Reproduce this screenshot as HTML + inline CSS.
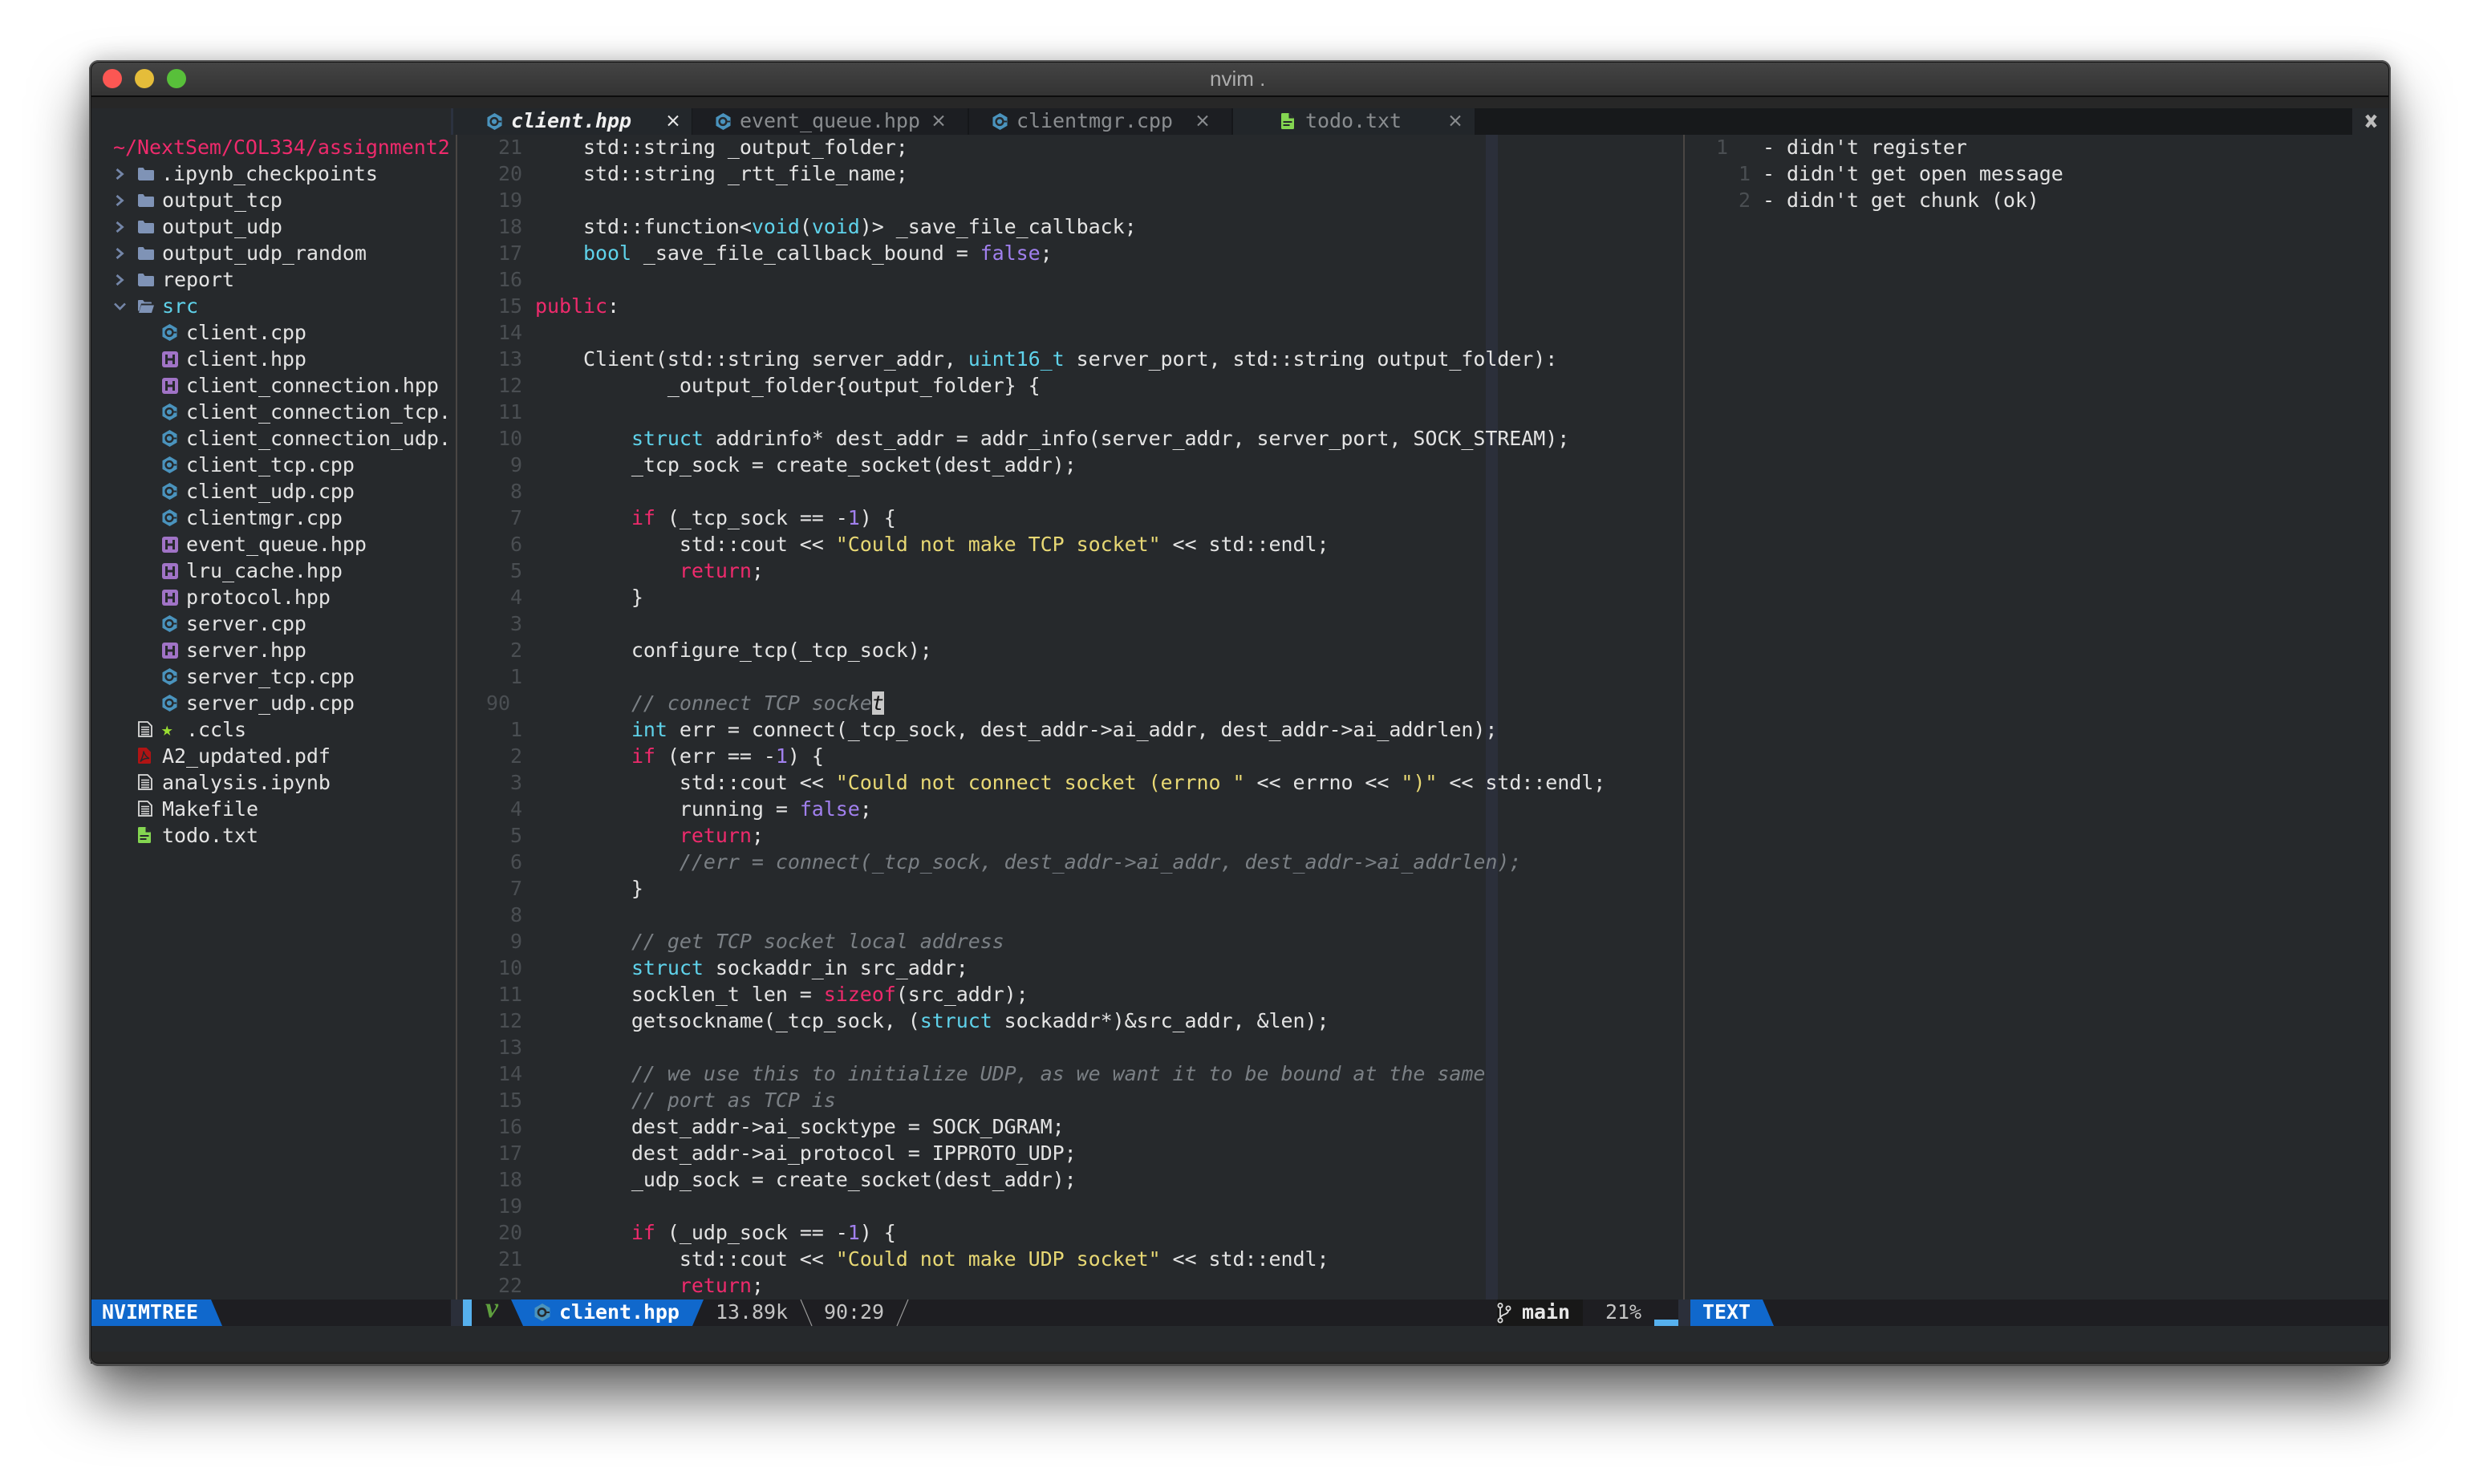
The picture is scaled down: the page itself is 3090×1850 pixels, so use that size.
<!DOCTYPE html>
<html>
<head>
<meta charset="utf-8">
<style>
html,body{margin:0;padding:0;background:#fff;}
body{width:3090px;height:1850px;overflow:hidden;position:relative;font-family:"DejaVu Sans Mono","Liberation Mono",monospace;font-size:25px;letter-spacing:-.06px;color:#e4e4e4;}
.a{position:absolute;}
pre{margin:0;font:inherit;line-height:33px;letter-spacing:inherit;}
.k{color:#ee2a6c}.t{color:#5fd2ea}.n{color:#a180ee}.s{color:#e8d874}.c{color:#7b8085;font-style:italic}
.r{position:absolute;left:0;height:33px;line-height:33px;white-space:pre;margin-top:-1px;}
.tab{position:absolute;height:33px;line-height:33px;top:-1px;white-space:pre;}
svg{position:absolute;display:block;overflow:visible;}
</style>
</head>
<body>
<svg width="0" height="0" style="position:absolute">
<defs>
<symbol id="cpp" viewBox="0 0 20 22"><polygon points="10,0 19.5,5.5 19.5,16.5 10,22 .5,16.5 .5,5.5" fill="#4a93bd"/><circle cx="9.5" cy="11" r="4.6" fill="none" stroke="#26292c" stroke-width="2.6"/><rect x="14" y="10" width="5" height="2" fill="#26292c"/></symbol>
<symbol id="hpp" viewBox="0 0 20 20"><rect x="0" y="0" width="20" height="20" rx="3" fill="#a073c6"/><path d="M5.5 4v12M14.5 4v12M5.5 10h9" stroke="#26292c" stroke-width="3" fill="none"/></symbol>
<symbol id="fold" viewBox="0 0 20 16"><path d="M0 1.5q0-1.5 1.5-1.5h5l2 3h10q1.5 0 1.5 1.5v10q0 1.5-1.5 1.5h-17q-1.500-1.500-1.500-1.500z" fill="#7f93b6"/></symbol>
<symbol id="open" viewBox="0 0 20 16"><path d="M0 1q0-1 1-1h5l2 2.500h8q1 0 1 1v1h-13l-2.500 9h-1.500z" fill="#7f93b6"/><path d="M4 6.500h16l-3 9.500h-16z" fill="#7f93b6"/></symbol>
<symbol id="doc" viewBox="0 0 18 20"><path d="M1 1h11l5 5v13h-16z" fill="none" stroke="#dcdcdc" stroke-width="1.800"/><path d="M4 7.500h10M4 10.500h10M4 13.500h10M4 16.500h10" stroke="#dcdcdc" stroke-width="1.500"/></symbol>
<symbol id="txt" viewBox="0 0 16 20"><path d="M1.500 0h8l6.500 6.500v12q0 1.500-1.500 1.500h-13q-1.500 0-1.500-1.500v-17q0-1.500 1.500-1.500z" fill="#84d651"/><path d="M9.500 0v6.500h6.500z" fill="#26292c"/><path d="M2.500 11h11M2.500 15h8" stroke="#26292c" stroke-width="2"/></symbol>
<symbol id="pdf" viewBox="0 0 16 20"><path d="M1.500 0h9l5.500 5.500v13q0 1.500-1.500 1.500h-13q-1.500 0-1.500-1.500v-17q0-1.500 1.500-1.500z" fill="#b01414"/><path d="M7 4.500c1 4 3 7 7 9-4-.5-8 .5-11 4 2-4 4-9 4-13z" fill="none" stroke="#26292c" stroke-width="1.500"/></symbol>
<symbol id="chev" viewBox="0 0 11 14"><path d="M1.500 1l7 6-7 6" fill="none" stroke="#7486a8" stroke-width="2.800"/></symbol>
<symbol id="chevd" viewBox="0 0 15 10"><path d="M1 1.500l6.500 6.500 6.500-6.500" fill="none" stroke="#7486a8" stroke-width="2.600"/></symbol>
</defs>
</svg>

<!-- window -->
<div class="a" style="left:111px;top:75px;width:2869px;height:1628px;border-radius:12px;background:#26292c;box-shadow:0 42px 70px rgba(0,0,0,.58),0 0 30px rgba(0,0,0,.22);"></div>
<div class="a" style="left:111px;top:75px;width:2869px;height:1628px;box-sizing:border-box;border-radius:12px;border:2px solid #4c4c4c;border-top-color:#555;border-bottom:3px solid #4a4a4a;box-shadow:0 0 0 1px #141414 inset;z-index:5;pointer-events:none"></div>

<!-- title bar -->
<div class="a" style="left:111px;top:75px;width:2869px;height:44px;border-radius:12px 12px 0 0;background:linear-gradient(#454545,#333);border-bottom:2px solid #0c0c0c;box-sizing:content-box;"></div>
<div class="a" style="left:128px;top:86px;width:24px;height:24px;border-radius:50%;background:#fc5753"></div>
<div class="a" style="left:168px;top:86px;width:24px;height:24px;border-radius:50%;background:#e5bd3a"></div>
<div class="a" style="left:208px;top:86px;width:24px;height:24px;border-radius:50%;background:#58c03a"></div>
<div class="a" style="left:1508px;top:82px;line-height:32px;font-family:'Liberation Sans',sans-serif;font-size:26px;letter-spacing:0;color:#aeaeae;white-space:pre">nvim .</div>
<div class="a" style="left:113px;top:121px;width:2864px;height:14px;background:#272727"></div>
<div class="a" style="left:113px;top:1685px;width:2864px;height:15px;background:#272727"></div>

<!-- tabs -->
<div class="a" style="left:0;top:135px;width:3090px;height:33px;">
  <div class="a" style="left:562px;top:0;width:3px;height:33px;background:#2c3240"></div>
  <div class="a" style="left:565px;top:0;width:297px;height:33px;background:#23272b"></div>
  <div class="a" style="left:862px;top:0;width:344px;height:33px;background:#1c1e22;border-left:1px solid #15171a;box-sizing:border-box"></div>
  <div class="a" style="left:1206px;top:0;width:331px;height:33px;background:#1c1e22;border-left:2px solid #15171a;border-right:2px solid #15171a;box-sizing:border-box"></div>
  <div class="a" style="left:1537px;top:0;width:301px;height:33px;background:#22262a"></div>
  <div class="a" style="left:1838px;top:0;width:1094px;height:33px;background:#17191b"></div>
  <svg style="left:607px;top:6px" width="19" height="21"><use href="#cpp"/></svg>
  <div class="tab" style="left:637px;font-weight:bold;font-style:italic;color:#f0f0f0">client.hpp</div>
  <svg style="left:832px;top:9px" width="14" height="13"><path d="M1 .5L13 12.500M13 .5L1 12.500" stroke="#e8e8e8" stroke-width="2"/></svg>
  <svg style="left:892px;top:6px" width="19" height="21"><use href="#cpp"/></svg>
  <div class="tab" style="left:922px;color:#8a8d90">event_queue.hpp</div>
  <svg style="left:1163px;top:9px" width="14" height="13"><path d="M1 .5L13 12.500M13 .5L1 12.500" stroke="#8a8d90" stroke-width="2"/></svg>
  <svg style="left:1237px;top:6px" width="19" height="21"><use href="#cpp"/></svg>
  <div class="tab" style="left:1267px;color:#8a8d90">clientmgr.cpp</div>
  <svg style="left:1492px;top:9px" width="14" height="13"><path d="M1 .5L13 12.500M13 .5L1 12.500" stroke="#8a8d90" stroke-width="2"/></svg>
  <svg style="left:1597px;top:6px" width="16" height="20"><use href="#txt"/></svg>
  <div class="tab" style="left:1627px;color:#8a8d90">todo.txt</div>
  <svg style="left:1807px;top:9px" width="14" height="13"><path d="M1 .5L13 12.500M13 .5L1 12.500" stroke="#8a8d90" stroke-width="2"/></svg>
  <svg style="left:2948px;top:8px" width="15" height="16"><path d="M2 1L13 15M13 1L2 15" stroke="#bcbcbc" stroke-width="4.500"/></svg>
</div>

<!-- separators & colorcolumn -->
<div class="a" style="left:568px;top:168px;width:2px;height:1452px;background:#4a4644"></div>
<div class="a" style="left:2098px;top:168px;width:2px;height:1452px;background:#4a4644"></div>
<div class="a" style="left:1852px;top:168px;width:15px;height:1452px;background:#2b2f3a"></div>

<!-- sidebar -->
<div class="a" style="left:0;top:168px;width:568px;height:1452px;overflow:hidden">
  <div class="r" style="top:0;left:141px;color:#ee2a6c">~/NextSem/COL334/assignment2</div>

  <svg style="left:144px;top:42px" width="11" height="14"><use href="#chev"/></svg><svg style="left:172px;top:41px" width="20" height="16"><use href="#fold"/></svg><div class="r" style="top:33px;left:201px">.ipynb_checkpoints</div>
  <svg style="left:144px;top:75px" width="11" height="14"><use href="#chev"/></svg><svg style="left:172px;top:74px" width="20" height="16"><use href="#fold"/></svg><div class="r" style="top:66px;left:202px">output_tcp</div>
  <svg style="left:144px;top:108px" width="11" height="14"><use href="#chev"/></svg><svg style="left:172px;top:107px" width="20" height="16"><use href="#fold"/></svg><div class="r" style="top:99px;left:202px">output_udp</div>
  <svg style="left:144px;top:141px" width="11" height="14"><use href="#chev"/></svg><svg style="left:172px;top:140px" width="20" height="16"><use href="#fold"/></svg><div class="r" style="top:132px;left:202px">output_udp_random</div>
  <svg style="left:144px;top:174px" width="11" height="14"><use href="#chev"/></svg><svg style="left:172px;top:173px" width="20" height="16"><use href="#fold"/></svg><div class="r" style="top:165px;left:202px">report</div>
  <svg style="left:142px;top:209px" width="15" height="10"><use href="#chevd"/></svg><svg style="left:172px;top:206px" width="20" height="16"><use href="#open"/></svg><div class="r" style="top:198px;left:202px;color:#5fd2ea">src</div>

  <svg style="left:202px;top:236px" width="19" height="21"><use href="#cpp"/></svg><div class="r" style="top:231px;left:232px">client.cpp</div>
  <svg style="left:202px;top:270px" width="20" height="20"><use href="#hpp"/></svg><div class="r" style="top:264px;left:232px">client.hpp</div>
  <svg style="left:202px;top:303px" width="20" height="20"><use href="#hpp"/></svg><div class="r" style="top:297px;left:232px">client_connection.hpp</div>
  <svg style="left:202px;top:335px" width="19" height="21"><use href="#cpp"/></svg><div class="r" style="top:330px;left:232px">client_connection_tcp.</div>
  <svg style="left:202px;top:368px" width="19" height="21"><use href="#cpp"/></svg><div class="r" style="top:363px;left:232px">client_connection_udp.</div>
  <svg style="left:202px;top:401px" width="19" height="21"><use href="#cpp"/></svg><div class="r" style="top:396px;left:232px">client_tcp.cpp</div>
  <svg style="left:202px;top:434px" width="19" height="21"><use href="#cpp"/></svg><div class="r" style="top:429px;left:232px">client_udp.cpp</div>
  <svg style="left:202px;top:467px" width="19" height="21"><use href="#cpp"/></svg><div class="r" style="top:462px;left:232px">clientmgr.cpp</div>
  <svg style="left:202px;top:501px" width="20" height="20"><use href="#hpp"/></svg><div class="r" style="top:495px;left:232px">event_queue.hpp</div>
  <svg style="left:202px;top:534px" width="20" height="20"><use href="#hpp"/></svg><div class="r" style="top:528px;left:232px">lru_cache.hpp</div>
  <svg style="left:202px;top:567px" width="20" height="20"><use href="#hpp"/></svg><div class="r" style="top:561px;left:232px">protocol.hpp</div>
  <svg style="left:202px;top:599px" width="19" height="21"><use href="#cpp"/></svg><div class="r" style="top:594px;left:232px">server.cpp</div>
  <svg style="left:202px;top:633px" width="20" height="20"><use href="#hpp"/></svg><div class="r" style="top:627px;left:232px">server.hpp</div>
  <svg style="left:202px;top:665px" width="19" height="21"><use href="#cpp"/></svg><div class="r" style="top:660px;left:232px">server_tcp.cpp</div>
  <svg style="left:202px;top:698px" width="19" height="21"><use href="#cpp"/></svg><div class="r" style="top:693px;left:232px">server_udp.cpp</div>

  <svg style="left:172px;top:731px" width="18" height="20"><use href="#doc"/></svg><div class="r" style="top:726px;left:201px;color:#9ade32;font-size:24px">★</div><div class="r" style="top:726px;left:232px">.ccls</div>
  <svg style="left:172px;top:764px" width="16" height="20"><use href="#pdf"/></svg><div class="r" style="top:759px;left:202px">A2_updated.pdf</div>
  <svg style="left:172px;top:797px" width="18" height="20"><use href="#doc"/></svg><div class="r" style="top:792px;left:202px">analysis.ipynb</div>
  <svg style="left:172px;top:830px" width="18" height="20"><use href="#doc"/></svg><div class="r" style="top:825px;left:202px">Makefile</div>
  <svg style="left:172px;top:863px" width="16" height="20"><use href="#txt"/></svg><div class="r" style="top:858px;left:202px">todo.txt</div>
</div>

<!-- line numbers -->
<pre class="a" style="left:570px;top:167px;width:81px;text-align:right;color:#4a4e52">21
20
19
18
17
16
15
14
13
12
11
10
9
8
7
6
5
4
3
2
1
<span style="position:relative;left:-15px">90</span>
1
2
3
4
5
6
7
8
9
10
11
12
13
14
15
16
17
18
19
20
21
22</pre>

<!-- code -->
<pre class="a" style="left:667px;top:167px">    std::string _output_folder;
    std::string _rtt_file_name;

    std::function&lt;<span class="t">void</span>(<span class="t">void</span>)&gt; _save_file_callback;
    <span class="t">bool</span> _save_file_callback_bound = <span class="n">false</span>;

<span class="k">public</span>:

    Client(std::string server_addr, <span class="t">uint16_t</span> server_port, std::string output_folder):
           _output_folder{output_folder} {

        <span class="t">struct</span> addrinfo* dest_addr = addr_info(server_addr, server_port, SOCK_STREAM);
        _tcp_sock = create_socket(dest_addr);

        <span class="k">if</span> (_tcp_sock == -<span class="n">1</span>) {
            std::cout &lt;&lt; <span class="s">"Could not make TCP socket"</span> &lt;&lt; std::endl;
            <span class="k">return</span>;
        }

        configure_tcp(_tcp_sock);

        <span class="c">// connect TCP socke</span><span style="background:#c8c8c8;color:#111;font-style:italic">t</span>
        <span class="t">int</span> err = connect(_tcp_sock, dest_addr-&gt;ai_addr, dest_addr-&gt;ai_addrlen);
        <span class="k">if</span> (err == -<span class="n">1</span>) {
            std::cout &lt;&lt; <span class="s">"Could not connect socket (errno "</span> &lt;&lt; errno &lt;&lt; <span class="s">")"</span> &lt;&lt; std::endl;
            running = <span class="n">false</span>;
            <span class="k">return</span>;
            <span class="c">//err = connect(_tcp_sock, dest_addr-&gt;ai_addr, dest_addr-&gt;ai_addrlen);</span>
        }

        <span class="c">// get TCP socket local address</span>
        <span class="t">struct</span> sockaddr_in src_addr;
        socklen_t len = <span class="k">sizeof</span>(src_addr);
        getsockname(_tcp_sock, (<span class="t">struct</span> sockaddr*)&amp;src_addr, &amp;len);

        <span class="c">// we use this to initialize UDP, as we want it to be bound at the same</span>
        <span class="c">// port as TCP is</span>
        dest_addr-&gt;ai_socktype = SOCK_DGRAM;
        dest_addr-&gt;ai_protocol = IPPROTO_UDP;
        _udp_sock = create_socket(dest_addr);

        <span class="k">if</span> (_udp_sock == -<span class="n">1</span>) {
            std::cout &lt;&lt; <span class="s">"Could not make UDP socket"</span> &lt;&lt; std::endl;
            <span class="k">return</span>;</pre>

<!-- right pane -->
<div class="r" style="left:2139px;top:168px;color:#4a4e52">1</div>
<div class="r" style="left:2167px;top:201px;color:#4a4e52">1</div>
<div class="r" style="left:2167px;top:234px;color:#4a4e52">2</div>
<pre class="a" style="left:2197px;top:167px">- didn't register
- didn't get open message
- didn't get chunk (ok)</pre>

<!-- status bar -->
<div class="a" style="left:113px;top:1620px;width:2864px;height:33px;background:#1e1e22;"></div>
<div class="a" style="left:0;top:1620px;width:3090px;height:33px;">
  <svg style="left:113px;top:0" width="165" height="33"><polygon points="0,0 150,0 164,33 0,33" fill="#1068cc"/></svg>
  <div class="tab" style="left:127px;font-weight:bold;color:#fff">NVIMTREE</div>
  <div class="a" style="left:562px;top:0;width:15px;height:33px;background:#2b2f3a"></div>
  <div class="a" style="left:577px;top:0;width:11px;height:33px;background:#56b0ee"></div>
  <div class="tab" style="left:605px;font-family:'Liberation Serif',serif;font-size:36px;font-weight:bold;font-style:italic;color:#5f9f3e;top:-6px">v</div>
  <svg style="left:637px;top:0" width="241" height="33"><polygon points="0,0 240,0 226,33 15,33" fill="#1068cc"/></svg>
  <svg style="left:666px;top:5px" width="20" height="22"><use href="#cpp"/></svg>
  <div class="tab" style="left:697px;font-weight:bold;color:#fff">client.hpp</div>
  <div class="tab" style="left:892px;color:#c4c4c4">13.89k</div>
  <svg style="left:998px;top:0" width="15" height="33"><path d="M0 0L14 33" stroke="#999" stroke-width="1.200"/></svg>
  <div class="tab" style="left:1027px;color:#c4c4c4">90:29</div>
  <svg style="left:1118px;top:0" width="15" height="33"><path d="M14 0L0 33" stroke="#999" stroke-width="1.200"/></svg>
  <div class="a" style="left:1866px;top:0;width:107px;height:33px;background:#181818"></div>
  <svg style="left:1866px;top:4px" width="18" height="26" viewBox="0 0 18 26"><circle cx="4" cy="3.500" r="2.600" fill="none" stroke="#ddd" stroke-width="1.800"/><circle cx="4" cy="22" r="2.600" fill="none" stroke="#ddd" stroke-width="1.800"/><circle cx="14" cy="7" r="2.600" fill="none" stroke="#ddd" stroke-width="1.800"/><path d="M4 6v13M14 10c0 5-9 4-10 9" fill="none" stroke="#ddd" stroke-width="1.800"/></svg>
  <div class="tab" style="left:1897px;font-weight:bold;color:#e8e8e8">main</div>
  <div class="tab" style="left:2001px;color:#c4c4c4">21%</div>
  <div class="a" style="left:2062px;top:25px;width:30px;height:8px;background:#56b0ee"></div>
  <div class="a" style="left:2092px;top:0;width:15px;height:33px;background:#2b2f3a"></div>
  <svg style="left:2107px;top:0" width="105" height="33"><polygon points="0,0 90,0 104,33 0,33" fill="#1068cc"/></svg>
  <div class="tab" style="left:2122px;font-weight:bold;color:#fff">TEXT</div>
</div>
</body>
</html>
